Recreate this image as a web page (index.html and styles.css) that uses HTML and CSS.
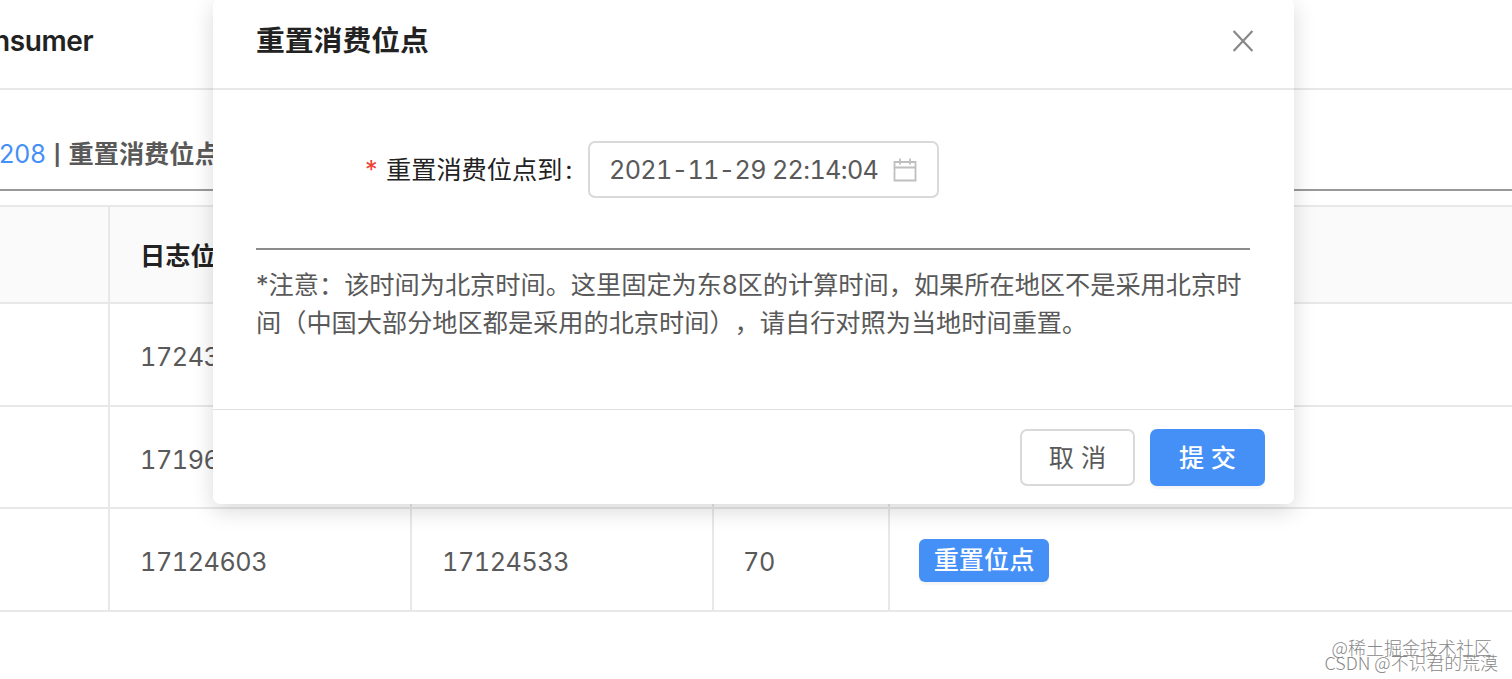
FILE: index.html
```html
<!DOCTYPE html>
<html lang="zh-CN">
<head>
	<meta charset="UTF-8" />
	<title>重置消费位点</title>
	<link rel="stylesheet" href="styles.css">
</head>
<body>
	<div class="page">
		<div class="page-header">nsumer</div>
		<div class="sub-title"><span class="link">208</span> <span class="split">|</span> 重置消费位点</div>
		<table class="table">
			<colgroup>
				<col class="col-first">
				<col class="col-log">
				<col class="col-pos">
				<col class="col-diff">
				<col>
			</colgroup>
			<thead>
				<tr><th></th><th>日志位点</th><th></th><th></th><th></th></tr>
			</thead>
			<tbody>
				<tr><td></td><td>17243</td><td></td><td></td><td></td></tr>
				<tr><td></td><td>17196</td><td></td><td></td><td></td></tr>
				<tr>
					<td></td>
					<td>17124603</td>
					<td>17124533</td>
					<td>70</td>
					<td><button class="btn-small">重置位点</button></td>
				</tr>
			</tbody>
		</table>
	</div>

	<div class="modal">
		<div class="modal-header">
			<span>重置消费位点</span>
			<svg class="close" width="22" height="22" viewBox="0 0 22 22">
				<path d="M1.6 1L20.4 21M20.4 1L1.6 21" />
			</svg>
		</div>
		<div class="modal-body">
			<div class="form-item">
				<label class="label"><span class="required">*</span>重置消费位点到<span class="colon">:</span></label>
				<div class="picker">
					<span class="picker-value">2021-11-29 22:14:04</span>
					<svg class="calendar" width="24" height="24" viewBox="0 0 24 24">
						<path d="M1.5 4H22.5V22.5H1.5ZM1.5 9.5H22.5M7 0.5V6.5M17 0.5V6.5" />
					</svg>
				</div>
			</div>
			<hr class="line">
			<p class="note">*注意：该时间为北京时间。这里固定为东8区的计算时间，如果所在地区不是采用北京时<br>间（中国大部分地区都是采用的北京时间），请自行对照为当地时间重置。</p>
		</div>
		<div class="modal-footer">
			<button class="btn">取 消</button>
			<button class="btn btn-primary">提 交</button>
		</div>
	</div>

	<div class="mark mark-site">@稀土掘金技术社区</div>
	<div class="mark mark-author">CSDN @不识君的荒漠</div>
</body>
</html>
```
FILE: styles.css
```css
*{
	box-sizing:border-box;
}
body{
	margin:0;
	width:1512px;
	height:679px;
	position:relative;
	overflow:hidden;
	background:#fff;
	color:#595959;
	font-family:Inter,"Noto Sans CJK SC",sans-serif;
	font-size:25.2px;
	line-height:38px;
	text-spacing-trim:space-all;
}
.page-header{
	height:90px;
	padding-top:22px;
	border-bottom:2px solid #e8e8e8;
	color:#222;
	font-size:28px;
	font-weight:600;
	letter-spacing:-0.4px;
	text-indent:-7px;
}
.sub-title{
	height:101px;
	padding-top:45px;
	border-bottom:2px solid #999;
	font-weight:600;
	white-space:pre;
}
.sub-title .link{
	margin-left:-1px;
	color:#4590f7;
	font-weight:400;
}
.sub-title .split{
	display:inline-block;
	width:10px;
	font-size:20px;
	font-weight:700;
	line-height:20px;
	text-align:center;
	vertical-align:1px;
}
.table{
	width:1512px;
	margin-top:14px;
	border-collapse:separate;
	border-spacing:0;
	border-top:2px solid #e8e8e8;
	table-layout:fixed;
}
.col-first{
	width:110px;
}
.col-log{
	width:302px;
}
.col-pos{
	width:302px;
}
.col-diff{
	width:176px;
}
.table th,
.table td{
	height:102.6px;
	padding:6px 29px 0 30px;
	border-right:2px solid #e8e8e8;
	border-bottom:2px solid #e8e8e8;
	text-align:left;
}
.table th{
	height:97px;
	padding-top:3px;
	background:#fafafa;
	color:#222;
	font-weight:600;
}
.table td{
	font-feature-settings:"tnum";
	letter-spacing:-0.45px;
}
.table td:nth-child(4){
	padding-left:29px;
}
.table th:last-child,
.table td:last-child{
	padding:3px 29px 0;
	border-right:0;
}
button{
	font-family:inherit;
	font-size:25.2px;
}
.btn-small{
	display:block;
	width:130px;
	height:43px;
	padding:0;
	border:0;
	border-radius:6px;
	background:#4590f7;
	box-shadow:0 3px 2px rgba(0,0,0,.04);
	color:#fff;
	font-weight:500;
	line-height:43px;
}
.modal{
	position:absolute;
	left:213px;
	top:-2px;
	width:1081px;
	height:506px;
	display:flex;
	flex-direction:column;
	border-radius:7px;
	background:#fff;
	box-shadow:0 7px 22px rgba(0,0,0,.15);
}
.modal-header{
	height:92px;
	padding:0 40px 4px 43px;
	display:flex;
	align-items:center;
	justify-content:space-between;
	border-bottom:2px solid #e8e8e8;
	color:#222;
	font-size:28.8px;
	font-weight:600;
}
.close{
	fill:none;
	stroke:#888;
	stroke-width:2.2;
}
.modal-body{
	flex:1;
	padding:51px 44px 0 43px;
}
.form-item{
	height:57px;
	padding-left:109px;
	display:flex;
	align-items:center;
}
.label{
	width:223px;
	color:#222;
	white-space:nowrap;
}
.required{
	display:inline-block;
	width:21px;
	color:#f04134;
}
.colon{
	margin-left:3px;
}
.picker{
	width:351px;
	height:57px;
	padding:0 20px 0 19px;
	display:flex;
	align-items:center;
	justify-content:space-between;
	border:2px solid #d9d9d9;
	border-radius:7px;
}
.picker-value{
	font-feature-settings:"tnum";
	letter-spacing:-0.65px;
	white-space:nowrap;
}
.calendar{
	fill:none;
	stroke:#bfbfbf;
	stroke-width:1.8;
}
.line{
	height:2px;
	margin:50px 0 16px;
	border:0;
	background:#8c8c8c;
}
.note{
	margin:0;
	white-space:nowrap;
}
.modal-footer{
	height:95px;
	padding:0 29px 0 0;
	display:flex;
	align-items:center;
	justify-content:flex-end;
	gap:15px;
	border-top:1px solid #e0e0e0;
}
.btn{
	width:115px;
	height:57px;
	padding:0 0 2px;
	border:2px solid #d9d9d9;
	border-radius:7px;
	background:#fff;
	color:#595959;
}
.btn-primary{
	border-color:#4590f7;
	background:#4590f7;
	box-shadow:0 3px 2px rgba(0,0,0,.04);
	color:#fff;
	font-weight:500;
}
.mark{
	position:absolute;
	color:#888;
	font-family:"Noto Sans CJK SC",sans-serif;
	font-weight:300;
	line-height:20px;
	white-space:nowrap;
}
.mark-site{
	right:20px;
	top:637px;
	font-size:18px;
}
.mark-author{
	right:14px;
	top:652px;
	font-size:17.9px;
}
```
